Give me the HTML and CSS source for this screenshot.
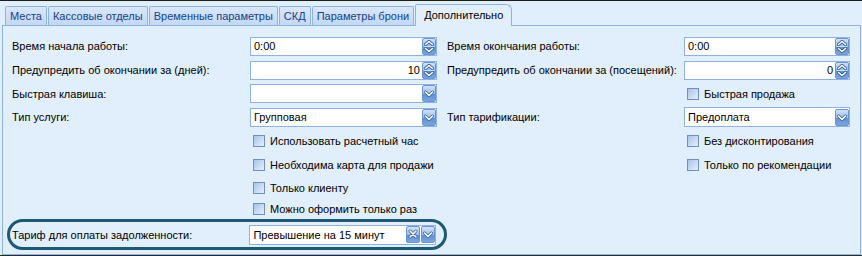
FILE: index.html
```html
<!DOCTYPE html>
<html lang="ru">
<head>
    <meta charset="UTF-8">
    <title>Дополнительно</title>
    <link rel="stylesheet" href="styles.css">
</head>
<body>
    <div class="tabs">
        <div class="tab">Места</div>
        <div class="tab">Кассовые отделы</div>
        <div class="tab">Временные параметры</div>
        <div class="tab">СКД</div>
        <div class="tab">Параметры брони</div>
        <div class="tab active">Дополнительно</div>
    </div>

    <div class="panel">
        <div class="form">
            <!-- row 1 -->
            <div class="label">Время начала работы:</div>
            <div class="field c2">
                <span class="val">0:00</span>
                <span class="btn"><svg viewBox="0 0 14 17" width="14" height="17"><path class="chev-o" d="M3.5 6.5L7 3.5l3.5 3"/><path class="chev" d="M3.5 6.5L7 3.5l3.5 3"/><path class="sep" d="M2 8.5h10"/><path class="chev-o" d="M3.5 10.5L7 13.5l3.5-3"/><path class="chev" d="M3.5 10.5L7 13.5l3.5-3"/></svg></span>
            </div>
            <div class="label c4">Время окончания работы:</div>
            <div class="field c5">
                <span class="val">0:00</span>
                <span class="btn"><svg viewBox="0 0 14 17" width="14" height="17"><path class="chev-o" d="M3.5 6.5L7 3.5l3.5 3"/><path class="chev" d="M3.5 6.5L7 3.5l3.5 3"/><path class="sep" d="M2 8.5h10"/><path class="chev-o" d="M3.5 10.5L7 13.5l3.5-3"/><path class="chev" d="M3.5 10.5L7 13.5l3.5-3"/></svg></span>
            </div>

            <!-- row 2 -->
            <div class="label">Предупредить об окончании за (дней):</div>
            <div class="field num c2">
                <span class="val">10</span>
                <span class="btn"><svg viewBox="0 0 14 17" width="14" height="17"><path class="chev-o" d="M3.5 6.5L7 3.5l3.5 3"/><path class="chev" d="M3.5 6.5L7 3.5l3.5 3"/><path class="sep" d="M2 8.5h10"/><path class="chev-o" d="M3.5 10.5L7 13.5l3.5-3"/><path class="chev" d="M3.5 10.5L7 13.5l3.5-3"/></svg></span>
            </div>
            <div class="label c4">Предупредить об окончании за (посещений):</div>
            <div class="field num c5">
                <span class="val">0</span>
                <span class="btn"><svg viewBox="0 0 14 17" width="14" height="17"><path class="chev-o" d="M3.5 6.5L7 3.5l3.5 3"/><path class="chev" d="M3.5 6.5L7 3.5l3.5 3"/><path class="sep" d="M2 8.5h10"/><path class="chev-o" d="M3.5 10.5L7 13.5l3.5-3"/><path class="chev" d="M3.5 10.5L7 13.5l3.5-3"/></svg></span>
            </div>

            <!-- row 3 -->
            <div class="label">Быстрая клавиша:</div>
            <div class="field c2">
                <span class="val"></span>
                <span class="btn"><svg viewBox="0 0 14 17" width="14" height="17"><path class="chev-o" d="M3.5 7L7 10.5 10.5 7"/><path class="chev" d="M3.5 7L7 10.5 10.5 7"/></svg></span>
            </div>
            <label class="check c5"><span class="box"></span>Быстрая продажа</label>

            <!-- row 4 -->
            <div class="label">Тип услуги:</div>
            <div class="field c2">
                <span class="val">Групповая</span>
                <span class="btn"><svg viewBox="0 0 14 17" width="14" height="17"><path class="chev-o" d="M3.5 7L7 10.5 10.5 7"/><path class="chev" d="M3.5 7L7 10.5 10.5 7"/></svg></span>
            </div>
            <div class="label c4">Тип тарификации:</div>
            <div class="field tall c5">
                <span class="val">Предоплата</span>
                <span class="btn"><svg viewBox="0 0 14 17" width="14" height="17"><path class="chev-o" d="M3.5 7L7 10.5 10.5 7"/><path class="chev" d="M3.5 7L7 10.5 10.5 7"/></svg></span>
            </div>

            <!-- checkbox rows -->
            <label class="check c2"><span class="box"></span>Использовать расчетный час</label>
            <label class="check c5"><span class="box"></span>Без дисконтирования</label>
            <label class="check c2"><span class="box"></span>Необходима карта для продажи</label>
            <label class="check c5"><span class="box"></span>Только по рекомендации</label>
            <label class="check c2"><span class="box"></span>Только клиенту</label>
            <label class="check c2"><span class="box"></span>Можно оформить только раз</label>
        </div>

        <div class="debt">
            <div class="label">Тариф для оплаты задолженности:</div>
            <div class="field tall">
                <span class="val">Превышение на 15 минут</span>
                <span class="btn"><svg viewBox="0 0 14 17" width="14" height="17"><path class="chev-o" d="M4 5l6 6M10 5l-6 6"/><path class="chev" d="M4 5l6 6M10 5l-6 6"/></svg></span>
                <span class="btn"><svg viewBox="0 0 14 17" width="14" height="17"><path class="chev-o" d="M3.5 7L7 10.5 10.5 7"/><path class="chev" d="M3.5 7L7 10.5 10.5 7"/></svg></span>
            </div>
        </div>
    </div>
</body>
</html>
```

FILE: styles.css
```css
* {
    box-sizing: border-box;
}
html, body {
    margin: 0;
    height: 256px;
    overflow: hidden;
}
body {
    width: 862px;
    padding-top: 3px;
    background: #e1eefb;
    border-top: 1px solid #1c1c1c;
    border-bottom: 1px solid #2a2a2a;
    font-family: "Liberation Sans", Arial, sans-serif;
    font-size: 11px;
    color: #000;
}

/* tabs */
.tabs {
    display: flex;
    align-items: flex-end;
    height: 21px;
    padding-left: 5px;
}
.tab {
    height: 19px;
    padding: 0 4px;
    margin-right: 1px;
    display: flex;
    align-items: center;
    color: #15428b;
    background: linear-gradient(#d9e7f8, #c3d8f3);
    border: 1px solid #8db2e3;
    border-bottom: none;
    border-radius: 2px 2px 0 0;
}
.tab.active {
    position: relative;
    height: 22px;
    margin-bottom: -1px;
    padding: 0 8px 1px 8px;
    color: #000;
    background: #e1eefb;
    border-radius: 2px 6px 0 0;
}

/* panel */
.panel {
    width: 859px;
    height: 230px;
    margin-left: 2px;
    border: 1px solid #8db2e3;
}
.form {
    display: grid;
    grid-template-columns: 238px 187px 10px 237px 166px;
    grid-template-rows: 24px 24px 23px 24px 24px 24px 22px 20px;
    align-items: center;
    padding: 8px 0 0 9px;
}
.c2 { grid-column: 2; }
.c4 { grid-column: 4; }
.c5 { grid-column: 5; }
.form .label:not(.c4) { grid-column: 1; }

.label {
    white-space: nowrap;
}

/* editors */
.field {
    display: flex;
    align-items: center;
    height: 19px;
    background: #fff;
    border: 1px solid #8db2e3;
    padding-left: 3px;
}
.field.tall {
    height: 20px;
}
.field .val {
    flex: 1;
    white-space: nowrap;
}
.field.num .val {
    text-align: right;
    padding-right: 1px;
}
.btn {
    width: 14px;
    height: 17px;
    margin-left: 1px;
    border: 1px solid #6a93cf;
    border-radius: 2px;
    background: linear-gradient(#d2e3f8, #9bbde9 50%, #5f8fd3 51%, #7aa5e0);
}
.btn svg {
    display: block;
    margin: -1px;
}
.chev-o {
    fill: none;
    stroke: #2d5a9c;
    stroke-width: 3;
    stroke-linecap: round;
    stroke-linejoin: round;
}
.chev {
    fill: none;
    stroke: #fff;
    stroke-width: 1.6;
    stroke-linecap: round;
    stroke-linejoin: round;
}
.sep {
    stroke: #e8f0fb;
    stroke-width: 1;
    opacity: 0.7;
}

/* checkboxes */
.check {
    display: flex;
    align-items: center;
    padding-left: 3px;
    white-space: nowrap;
}
.box {
    width: 12px;
    height: 12px;
    margin-right: 5px;
    border: 1px solid #6f8fbf;
    background: linear-gradient(135deg, #a9c3e8, #e6effb);
}

/* highlighted debt row */
.debt {
    display: flex;
    align-items: center;
    width: 440px;
    height: 31px;
    margin-left: 4px;
    padding: 0 8px 0 2px;
    border: 3px solid #1b5a72;
    border-radius: 16px;
}
.debt .label {
    width: 238px;
}
.debt .field {
    width: 187px;
}
```
